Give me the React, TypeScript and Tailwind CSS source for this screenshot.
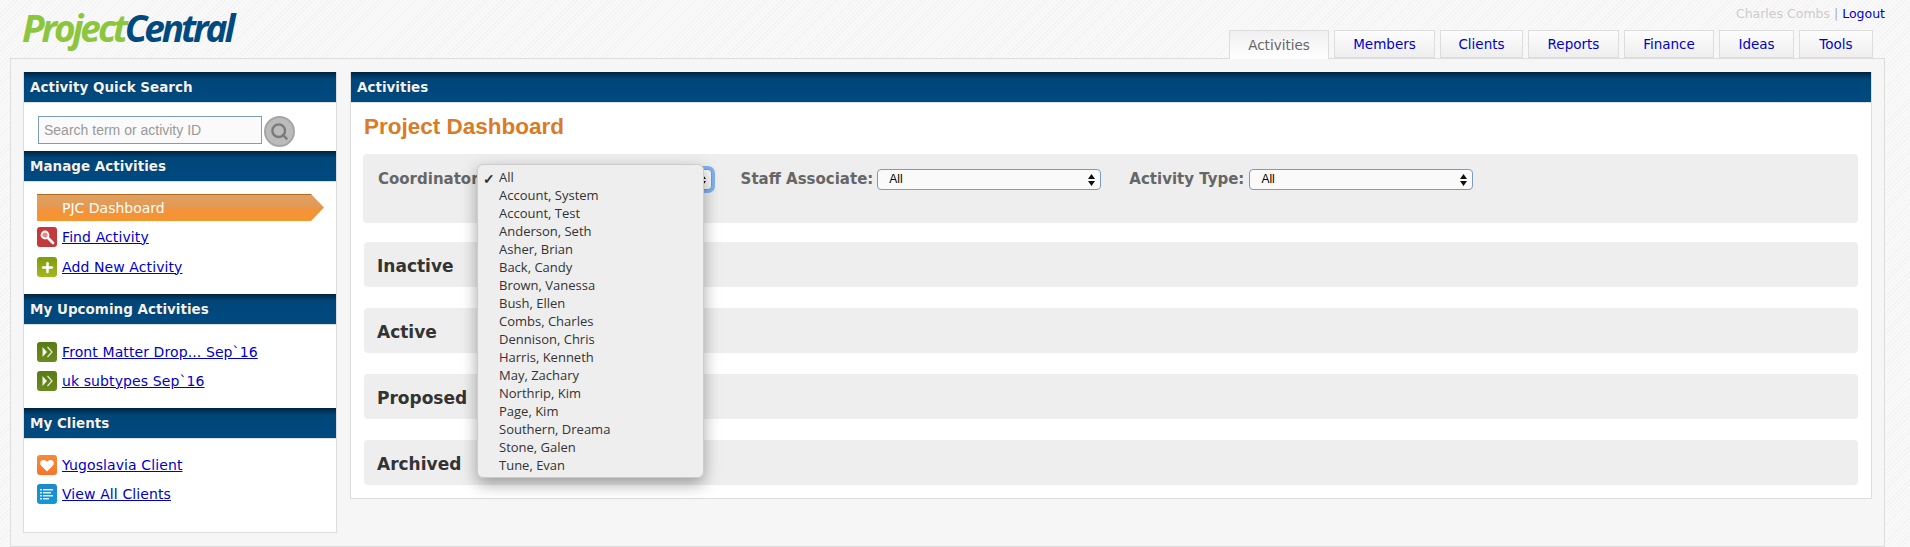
import { Search, Plus } from "lucide-react";

const coordinators = [
  "All",
  "Account, System",
  "Account, Test",
  "Anderson, Seth",
  "Asher, Brian",
  "Back, Candy",
  "Brown, Vanessa",
  "Bush, Ellen",
  "Combs, Charles",
  "Dennison, Chris",
  "Harris, Kenneth",
  "May, Zachary",
  "Northrip, Kim",
  "Page, Kim",
  "Southern, Dreama",
  "Stone, Galen",
  "Tune, Evan",
];

const tabs = [
  { label: "Members", width: "w-[101px]" },
  { label: "Clients", width: "w-[83px]" },
  { label: "Reports", width: "w-[91px]" },
  { label: "Finance", width: "w-[90px]" },
  { label: "Ideas", width: "w-[75px]" },
  { label: "Tools", width: "w-[74px]" },
];

function PanelHeader({ title }: { title: string }) {
  return (
    <div className="h-[30px] pl-[6px] flex items-center bg-[linear-gradient(#00233f,#004679_7px,#004a80)] border-b border-[#dddddd] box-content -mb-px text-[13.5px] font-bold text-[#f2f2f2] [text-shadow:0_0_1px_#00000080]">
      {title}
    </div>
  );
}

function Tile({ className, children }: { className: string; children: React.ReactNode }) {
  return (
    <span className={`w-[20px] h-[20px] rounded-[3px] flex items-center justify-center shrink-0 ${className}`}>
      {children}
    </span>
  );
}

function SideLink({ icon, label }: { icon: React.ReactNode; label: string }) {
  return (
    <div className="h-[20px] flex items-center gap-[5px]">
      {icon}
      <a className="text-[14px] tracking-[0.1px] text-[#0000cc] underline">{label}</a>
    </div>
  );
}

function SelectBox({ focused, className }: { focused?: boolean; className: string }) {
  return (
    <div
      className={`relative w-[224px] h-[21px] rounded-[4px] border border-[#7c9cbf] bg-[#fafafa] pl-[11px] flex items-center text-[12px] text-black font-['Liberation_Sans',sans-serif] ${className} ${
        focused ? "shadow-[0_0_0_3px_#7fb2f0]" : ""
      }`}
    >
      All
      <svg className="absolute right-[5px] top-[4px]" width="7" height="12" viewBox="0 0 7 12">
        <path d="M3.5 0 7 5H0z M0 7h7l-3.5 5z" fill="#111" />
      </svg>
    </div>
  );
}

function FilterLabel({ text }: { text: string }) {
  return <span className="text-[15px] font-bold text-[#666666]">{text}</span>;
}

function StatusBar({ label }: { label: string }) {
  return (
    <div className="h-[45px] pl-[13px] pt-[4px] flex items-center rounded-[4px] bg-[#eeeeee] text-[17px] font-bold text-[#333333]">
      {label}
    </div>
  );
}

function FindGlyph() {
  return (
    <svg width="16" height="16" viewBox="0 0 16 16" fill="none">
      <circle cx="6" cy="6" r="3.500" stroke="#ffffff" strokeWidth="1.800" fill="#e58a8a" />
      <path d="M9 9l5 5" stroke="#ffffff" strokeWidth="2.800" strokeLinecap="round" />
    </svg>
  );
}

function DoubleArrow() {
  return (
    <svg width="12" height="12" viewBox="0 0 12 12">
      <path d="M1.500 1 6 6l-4.500 5z" fill="#f3f3e6" />
      <path d="M6.500 1 11 6l-4.500 5" fill="none" stroke="#e4e8cf" strokeWidth="1.300" />
    </svg>
  );
}

function HeartGlyph() {
  return (
    <svg width="14" height="13" viewBox="0 0 14 13">
      <path d="M7 12.500 1 6.500C-1 3.500 1 1 3.500 1 5 1 6.200 1.800 7 3 7.800 1.800 9 1 10.500 1 13 1 15 3.500 13 6.500z" fill="#ffffff" />
    </svg>
  );
}

function ListLines() {
  return (
    <svg width="14" height="12" viewBox="0 0 14 12" fill="#d8eefa">
      <path d="M0 1h2v1.500H0zM3 1h10v1.500H3zM0 4h2v1.500H0zM3 4h8v1.500H3zM0 7h2v1.500H0zM3 7h10v1.500H3zM0 10h2v1.500H0zM3 10h6v1.500H3z" />
    </svg>
  );
}

export default function App() {
  return (
    <div className="w-[1910px] h-[547px] overflow-hidden font-['DejaVu_Sans',sans-serif] bg-[repeating-linear-gradient(135deg,#f3f3f3,#f3f3f3_1px,#f9f9f9_1px,#f9f9f9_3px)]">
      {/* top bar */}
      <div className="h-[58px] pl-[22px] pr-[25px] flex justify-between">
        <div className="pt-[5px] text-[37px] leading-[46px] tracking-[-3.1px] italic font-bold font-['Open_Sans',sans-serif] text-[#8cc63f]">
          Project<span className="text-[#004a80]">Central</span>
        </div>
        <div className="flex flex-col items-end">
          <div className="h-[30px] pt-[5px] text-[12.5px] text-[#cccccc]">
            Charles Combs <span className="text-[#aaaaaa]">|</span> <a className="text-[#0000cc]">Logout</a>
          </div>
          <div className="mr-[12px] flex gap-[5px]">
            <div className="w-[100px] h-[29px] -mb-px flex items-center justify-center border border-b-0 border-[#dddddd] bg-gradient-to-b from-[#f0f0f0] to-[#ffffff] text-[13.5px] text-[#666666] z-10">
              Activities
            </div>
            {tabs.map((t) => (
              <a
                key={t.label}
                className={`${t.width} h-[28px] flex items-center justify-center border border-[#dddddd] bg-gradient-to-b from-[#fdfdfd] to-[#eeeeee] text-[13.5px] text-[#0000cc]`}
              >
                {t.label}
              </a>
            ))}
          </div>
        </div>
      </div>

      {/* main frame */}
      <div className="ml-[10px] mr-[25px] h-[489px] border border-[#dddddd] bg-[#f6f6f6] pt-[13px] pl-[12px] pr-[12px] flex gap-[13px] items-start">
        {/* sidebar */}
        <div className="w-[314px] h-[461px] shrink-0 bg-white border border-t-0 border-[#dddddd]">
          <PanelHeader title="Activity Quick Search" />
          <div className="h-[49px] pt-[14px] pl-[14px] flex items-start gap-[2px]">
            <input
              placeholder="Search term or activity ID"
              className="w-[224px] h-[28px] px-[5px] border border-[#7f9db9] bg-[#fafafa] text-[14px] font-['Liberation_Sans',sans-serif] placeholder:text-[#999999] outline-none"
            />
            <div className="w-[31px] h-[31px] rounded-full bg-[#bbbbbb] border-2 border-[#a6a6a6] flex items-center justify-center">
              <Search size={19} strokeWidth={3} className="text-[#7a7a7a]" />
            </div>
          </div>

          <PanelHeader title="Manage Activities" />
          <div className="h-[113px] pt-[13px] pl-[13px]">
            <div className="w-[287px] h-[27px] pl-[25px] flex items-center bg-[linear-gradient(#e0a060,#e29a55_45%,#f3923a_55%,#f6962f)] border-t border-[#b5691f] text-[14px] text-white [clip-path:polygon(0_0,calc(100%-13px)_0,100%_50%,calc(100%-13px)_100%,0_100%)]">
              PJC Dashboard
            </div>
            <div className="mt-[6px] flex flex-col gap-[10px]">
              <SideLink
                label="Find Activity"
                icon={
                  <Tile className="bg-[#c43a3c]">
                    <FindGlyph />
                  </Tile>
                }
              />
              <SideLink
                label="Add New Activity"
                icon={
                  <Tile className="bg-gradient-to-b from-[#7f9a10] to-[#a4b81c]">
                    <Plus size={15} strokeWidth={4} className="text-white" />
                  </Tile>
                }
              />
            </div>
          </div>

          <PanelHeader title="My Upcoming Activities" />
          <div className="h-[84px] pt-[18px] pl-[13px] flex flex-col gap-[9px]">
            <SideLink
              label="Front Matter Drop... Sep`16"
              icon={
                <Tile className="bg-gradient-to-b from-[#5a7a14] to-[#6b8a1e]">
                  <DoubleArrow />
                </Tile>
              }
            />
            <SideLink
              label="uk subtypes Sep`16"
              icon={
                <Tile className="bg-gradient-to-b from-[#5a7a14] to-[#6b8a1e]">
                  <DoubleArrow />
                </Tile>
              }
            />
          </div>

          <PanelHeader title="My Clients" />
          <div className="pt-[17px] pl-[13px] flex flex-col gap-[9px]">
            <SideLink
              label="Yugoslavia Client"
              icon={
                <Tile className="bg-gradient-to-b from-[#f58a3a] to-[#f7752a]">
                  <HeartGlyph />
                </Tile>
              }
            />
            <SideLink
              label="View All Clients"
              icon={
                <Tile className="bg-gradient-to-b from-[#1e88cc] to-[#0e9ad6]">
                  <ListLines />
                </Tile>
              }
            />
          </div>
        </div>

        {/* activities panel */}
        <div className="flex-1 h-[427px] bg-white border border-t-0 border-[#dddddd]">
          <PanelHeader title="Activities" />
          <div className="px-[13px]">
            <h1 className="h-[52px] pt-[11px] text-[22.5px] leading-[28px] font-bold text-[#d97b27] font-['Liberation_Sans',sans-serif]">
              Project Dashboard
            </h1>
            <div className="relative h-[69px] pt-[14px] pl-[15px] -ml-px rounded-[4px] bg-[#eeeeee] flex items-start">
              <div className="flex items-center">
                <FilterLabel text="Coordinator:" />
                <SelectBox focused className="ml-[3px]" />
              </div>
              <div className="ml-[29px] flex items-center">
                <FilterLabel text="Staff Associate:" />
                <SelectBox className="ml-[4px]" />
              </div>
              <div className="ml-[28px] flex items-center">
                <FilterLabel text="Activity Type:" />
                <SelectBox className="ml-[5px]" />
              </div>

              {/* open native menu */}
              <div className="absolute left-[114px] top-[10px] z-20 w-[227px] h-[314px] pt-[4px] rounded-[6px] bg-[#eeeeee] border border-[#cccccc] shadow-[0_6px_16px_#00000059]">
                {coordinators.map((name, i) => (
                  <div
                    key={name}
                    className="relative h-[18px] pl-[21px] flex items-center text-[13px] text-[#333333] font-['Open_Sans',sans-serif]"
                  >
                    {i === 0 && <span className="absolute left-[5px] text-[14px] font-bold">✓</span>}
                    {name}
                  </div>
                ))}
              </div>
            </div>
            <div className="mt-[19px] flex flex-col gap-[21px]">
              <StatusBar label="Inactive" />
              <StatusBar label="Active" />
              <StatusBar label="Proposed" />
              <StatusBar label="Archived" />
            </div>
          </div>
        </div>
      </div>
    </div>
  );
}
